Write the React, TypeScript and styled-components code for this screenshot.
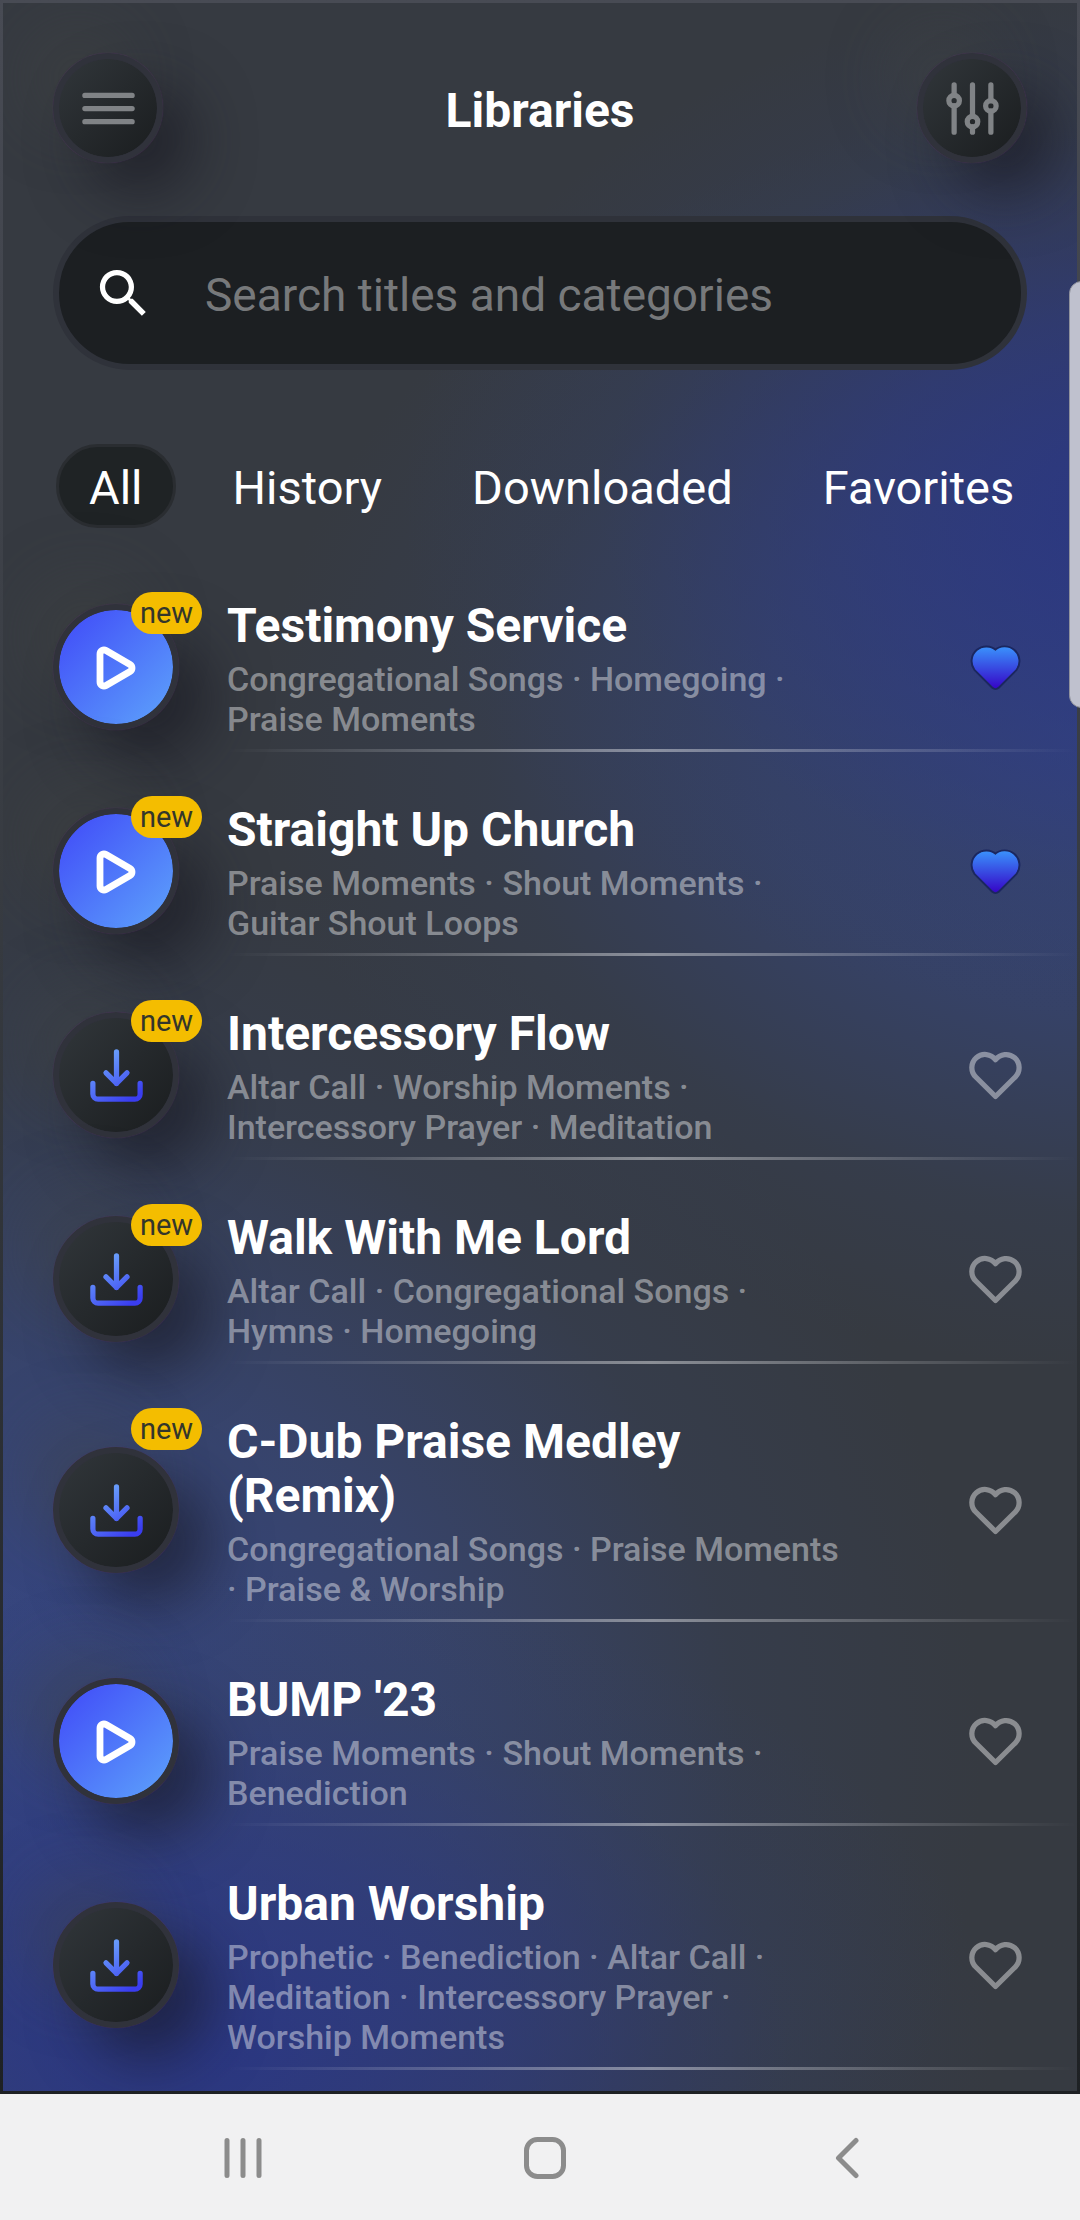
import React, { useState } from "react";
import styled, { createGlobalStyle, css } from "styled-components";

const GlobalStyle = createGlobalStyle`
  *, *::before, *::after { box-sizing: border-box; }
  html, body { margin: 0; padding: 0; }
  body { background: #f1f1f2; font-family: Roboto, "Noto Sans", sans-serif; }
  button, input { font: inherit; color: inherit; }
  button { margin: 0; padding: 0; border: 0; background: none; cursor: pointer; }
  h1, h2, p, ul { margin: 0; padding: 0; }
  svg { display: block; flex: none; }
`;

const Phone = styled.div`
  position: relative;
  display: flex;
  flex-direction: column;
  min-height: 100vh;
  overflow: hidden;
`;

const Screen = styled.main`
  flex: 1;
  overflow: hidden;
  border: 3px solid transparent;
  padding: 50px 0 21px 50px;
  background:
    radial-gradient(760px 520px at 108% 24%, rgba(40, 52, 136, 0.8) 0%, rgba(44, 56, 128, 0.6) 38%, rgba(50, 62, 100, 0.26) 74%, rgba(54, 58, 66, 0) 100%) padding-box,
    radial-gradient(900px 640px at 108% 35%, rgba(52, 72, 152, 0.8) 0%, rgba(54, 72, 132, 0.56) 45%, rgba(54, 66, 96, 0.3) 75%, rgba(54, 60, 70, 0) 100%) padding-box,
    radial-gradient(800px 480px at 18% 98%, rgba(40, 52, 136, 0.8) 0%, rgba(44, 56, 128, 0.6) 38%, rgba(50, 62, 100, 0.28) 74%, rgba(54, 58, 66, 0) 100%) padding-box,
    radial-gradient(980px 920px at 0% 84%, rgba(54, 74, 156, 0.8) 0%, rgba(56, 74, 134, 0.6) 45%, rgba(54, 66, 96, 0.32) 75%, rgba(54, 60, 70, 0) 100%) padding-box,
    linear-gradient(#363a41, #363a41) padding-box,
    linear-gradient(#484b54, #363a40 45%, #1e2124) border-box;
`;

const raised = css`
  border: 6px solid #30323b;
  border-radius: 50%;
  box-shadow:
    0 0 1px 0 rgba(130, 50, 150, 0.5),
    32px 32px 56px 0 rgba(22, 22, 30, 0.56),
    -30px -30px 60px 0 rgba(68, 70, 68, 0.34);
`;

const Header = styled.header`
  display: grid;
  grid-template-columns: 110px 1fr 110px;
  align-items: center;
  padding-right: 50px;
`;

const Title = styled.h1`
  padding-top: 6px;
  text-align: center;
  color: #fff;
  font-size: 48px;
  line-height: 54px;
  font-weight: 700;
`;

const RoundButton = styled.button<{ $size: number; $accent?: boolean }>`
  ${raised}
  display: flex;
  align-items: center;
  justify-content: center;
  width: ${(p) => p.$size}px;
  height: ${(p) => p.$size}px;
  color: ${(p) => (p.$accent ? "#fff" : "#808386")};
  background: ${(p) =>
    p.$accent
      ? "linear-gradient(135deg, #4250f8 8%, #5b9cfb 92%) padding-box, #30323b"
      : "linear-gradient(135deg, #2f3438 8%, #1c1f21 92%) padding-box, #30323b"};
`;

const SearchBox = styled.label`
  display: flex;
  align-items: center;
  gap: 50px;
  height: 154px;
  margin: 53px 50px 0 0;
  padding: 0 33px;
  border: 6px solid #2f323a;
  border-radius: 77px;
  background: #1c1f22;
  color: #fff;
`;

const SearchInput = styled.input`
  flex: 1;
  min-width: 0;
  padding: 4px 0 0;
  border: 0;
  outline: 0;
  background: none;
  font-size: 46px;
  line-height: 54px;
  &::placeholder { color: #77797b; opacity: 1; }
`;

const Tabs = styled.nav`
  display: flex;
  gap: 24px;
  margin: 74px 0 20px 3px;
`;

const Tab = styled.button<{ $active: boolean }>`
  height: 84px;
  padding: 4px 30px 0;
  border: 3px solid ${(p) => (p.$active ? "#2a2d31" : "transparent")};
  border-radius: 42px;
  background: ${(p) => (p.$active ? "#1f2325" : "none")};
  color: #fff;
  font-size: 47px;
  line-height: 54px;
  white-space: nowrap;
`;

const List = styled.ul`
  list-style: none;
`;

const Row = styled.li`
  position: relative;
  display: grid;
  grid-template-columns: 174px 1fr;
  padding-top: 47px;
`;

const RowBody = styled.div`
  display: grid;
  grid-column: 1 / -1;
  grid-template-columns: 126px 1fr 63px;
  column-gap: 48px;
  align-items: center;
  padding-right: 50px;
`;

const RowText = styled.div`
  padding: 4px 70px 0 0;
`;

const RowTitle = styled.h2`
  color: #fff;
  font-size: 48px;
  line-height: 54px;
  font-weight: 700;
`;

const RowTags = styled.p`
  margin-top: 6px;
  color: rgba(255, 255, 255, 0.42);
  font-size: 34px;
  line-height: 40px;
  font-weight: 500;
`;

const Badge = styled.span`
  position: absolute;
  top: 44px;
  left: 78px;
  width: 71px;
  height: 42px;
  border-radius: 21px;
  background: #f4bd00;
  color: #33362b;
  font-size: 29px;
  line-height: 42px;
  text-align: center;
`;

const HeartButton = styled.button`
  display: flex;
  align-items: center;
  justify-content: center;
  height: 64px;
  color: rgba(255, 255, 255, 0.42);
`;

const Divider = styled.div`
  grid-column: 2;
  height: 3px;
  margin-top: 10px;
  background: linear-gradient(90deg, rgba(255, 255, 255, 0), rgba(255, 255, 255, 0.42) 50%, rgba(255, 255, 255, 0));
`;

const EdgeHandle = styled.div`
  position: absolute;
  top: 281px;
  right: -14px;
  width: 25px;
  height: 427px;
  border: 1px solid #8f919c;
  border-radius: 14px;
  background: #bfc1ce;
`;

const SystemBar = styled.footer`
  display: grid;
  grid-template-columns: 1fr 1fr 1fr;
  height: 126px;
  padding: 0 82px 0 92px;
  background: #f1f1f2;
`;

const SystemButton = styled.button`
  display: flex;
  align-items: center;
  justify-content: center;
  padding-top: 2px;
  color: #8c8c8c;
`;

const ICON = 63;

const Stroke = ({ children, size = ICON, width = 2, viewBox = "0 0 24 24", color = "currentColor" }: {
  children: React.ReactNode; size?: number; width?: number; viewBox?: string; color?: string;
}) => (
  <svg width={size} height={size} viewBox={viewBox} fill="none" stroke={color} strokeWidth={width}
    strokeLinecap="round" strokeLinejoin="round" aria-hidden="true">
    {children}
  </svg>
);

const MenuIcon = () => <Stroke><path d="M3 7h18M3 12h18M3 17h18" /></Stroke>;

const SlidersIcon = () => (
  <Stroke>
    <path d="M5 3v4M5 11v10M12 3v12M12 19v2M19 3v6M19 13v8" />
    <circle cx="5" cy="9" r="2" />
    <circle cx="12" cy="17" r="2" />
    <circle cx="19" cy="11" r="2" />
  </Stroke>
);

const SearchIcon = () => (
  <svg width={ICON} height={ICON} viewBox="0 0 24 24" fill="currentColor" aria-hidden="true">
    <path d="M15.5 14h-.79l-.28-.27A6.471 6.471 0 0 0 16 9.5 6.5 6.5 0 1 0 9.5 16c1.61 0 3.09-.59 4.23-1.57l.27.28v.79l5 4.99L20.49 19l-4.99-5zm-6 0C7.01 14 5 11.99 5 9.5S7.01 5 9.5 5 14 7.01 14 9.5 11.99 14 9.5 14z" />
  </svg>
);

const PlayIcon = () => (
  <Stroke size={48} width={3.4} viewBox="1 -0.5 24 24">
    <path d="M5 5a2 2 0 0 1 3.008-1.728l11.997 6.998a2 2 0 0 1 .003 3.458l-12 7A2 2 0 0 1 5 19z" />
  </Stroke>
);

const DownloadIcon = () => (
  <Stroke color="url(#download-ink)">
    <path d="M3 15v4a2 2 0 0 0 2 2h14a2 2 0 0 0 2-2v-4M8 11l4 4 4-4M12 3v12" />
  </Stroke>
);

const HEART = "M19.5 12.572l-7.5 7.428l-7.5 -7.428a5 5 0 1 1 7.5 -6.566a5 5 0 1 1 7.5 6.572z";

const HEART_SOLID = "M19.5 12.572l-6.700 6.700a1.200 1.200 0 0 1 -1.600 0l-6.700 -6.700a5 5 0 0 1 7.5 -6.566a5 5 0 0 1 7.5 6.572z";

const HeartIcon = ({ filled }: { filled: boolean }) =>
  filled ? (
    <svg width={ICON} height={ICON} viewBox="0 0 24 24" aria-hidden="true">
      <path d={HEART_SOLID} fill="#1b275f" stroke="#1b275f" strokeWidth="2" strokeLinejoin="round" />
      <path d={HEART_SOLID} fill="url(#heart-fill)" stroke="url(#heart-fill)" strokeWidth="0.5" strokeLinejoin="round" />
    </svg>
  ) : (
    <Stroke><path d={HEART} /></Stroke>
  );

const GradientDefs = styled.svg`
  position: absolute;
`;

const Gradients = () => (
  <GradientDefs width="0" height="0" aria-hidden="true">
    <defs>
      <linearGradient id="download-ink" gradientUnits="userSpaceOnUse" x1="7" y1="4" x2="18" y2="21">
        <stop offset="0" stopColor="#6ba2fb" />
        <stop offset="1" stopColor="#3a3df0" />
      </linearGradient>
      <linearGradient id="heart-fill" x1="0" y1="0" x2="0" y2="1">
        <stop offset="0" stopColor="#3a8efb" />
        <stop offset="1" stopColor="#3608c8" />
      </linearGradient>
    </defs>
  </GradientDefs>
);

type Library = { title: string; tags: string[]; owned: boolean; fresh: boolean; liked: boolean };

const LIBRARIES: Library[] = [
  { title: "Testimony Service", tags: ["Congregational Songs", "Homegoing", "Praise Moments"], owned: true, fresh: true, liked: true },
  { title: "Straight Up Church", tags: ["Praise Moments", "Shout Moments", "Guitar Shout Loops"], owned: true, fresh: true, liked: true },
  { title: "Intercessory Flow", tags: ["Altar Call", "Worship Moments", "Intercessory Prayer", "Meditation"], owned: false, fresh: true, liked: false },
  { title: "Walk With Me Lord", tags: ["Altar Call", "Congregational Songs", "Hymns", "Homegoing"], owned: false, fresh: true, liked: false },
  { title: "C-Dub Praise Medley (Remix)", tags: ["Congregational Songs", "Praise Moments", "Praise & Worship"], owned: false, fresh: true, liked: false },
  { title: "BUMP '23", tags: ["Praise Moments", "Shout Moments", "Benediction"], owned: true, fresh: false, liked: false },
  { title: "Urban Worship", tags: ["Prophetic", "Benediction", "Altar Call", "Meditation", "Intercessory Prayer", "Worship Moments"], owned: false, fresh: false, liked: false },
];

const TABS = ["All", "History", "Downloaded", "Favorites"];

export default function App() {
  const [tab, setTab] = useState("All");
  const [liked, setLiked] = useState(() => LIBRARIES.map((l) => l.liked));

  const toggle = (i: number) => setLiked((prev) => prev.map((v, n) => (n === i ? !v : v)));

  return (
    <Phone>
      <GlobalStyle />
      <Gradients />
      <Screen>
        <Header>
          <RoundButton $size={110} aria-label="Menu"><MenuIcon /></RoundButton>
          <Title>Libraries</Title>
          <RoundButton $size={110} aria-label="Filters"><SlidersIcon /></RoundButton>
        </Header>
        <SearchBox>
          <SearchIcon />
          <SearchInput type="text" aria-label="Search" placeholder="Search titles and categories" />
        </SearchBox>
        <Tabs>
          {TABS.map((name) => (
            <Tab key={name} $active={name === tab} aria-pressed={name === tab} onClick={() => setTab(name)}>
              {name}
            </Tab>
          ))}
        </Tabs>
        <List>
          {LIBRARIES.map((lib, i) => (
            <Row key={lib.title}>
              <RowBody>
                <RoundButton $size={126} $accent={lib.owned} aria-label={(lib.owned ? "Play " : "Download ") + lib.title}>
                  {lib.owned ? <PlayIcon /> : <DownloadIcon />}
                </RoundButton>
                <RowText>
                  <RowTitle>{lib.title}</RowTitle>
                  <RowTags>{lib.tags.join(" · ")}</RowTags>
                </RowText>
                <HeartButton aria-label={"Favorite " + lib.title} aria-pressed={liked[i]} onClick={() => toggle(i)}>
                  <HeartIcon filled={liked[i]} />
                </HeartButton>
              </RowBody>
              {lib.fresh && <Badge>new</Badge>}
              <Divider />
            </Row>
          ))}
        </List>
      </Screen>
      <EdgeHandle />
      <SystemBar>
        <SystemButton aria-label="Recent apps">
          <svg width="42" height="42" viewBox="0 0 42 42" fill="none" stroke="currentColor" strokeWidth="5" strokeLinecap="round">
            <path d="M5 3.500v35M21 3.500v35M37 3.500v35" />
          </svg>
        </SystemButton>
        <SystemButton aria-label="Home">
          <svg width="42" height="42" viewBox="0 0 42 42" fill="none" stroke="currentColor" strokeWidth="5">
            <rect x="2.500" y="2.500" width="37" height="37" rx="11" />
          </svg>
        </SystemButton>
        <SystemButton aria-label="Back">
          <svg width="42" height="42" viewBox="0 0 42 42" fill="none" stroke="currentColor" strokeWidth="5" strokeLinecap="round" strokeLinejoin="round">
            <path d="M30 3.500L12.500 21L30 38.500" />
          </svg>
        </SystemButton>
      </SystemBar>
    </Phone>
  );
}
